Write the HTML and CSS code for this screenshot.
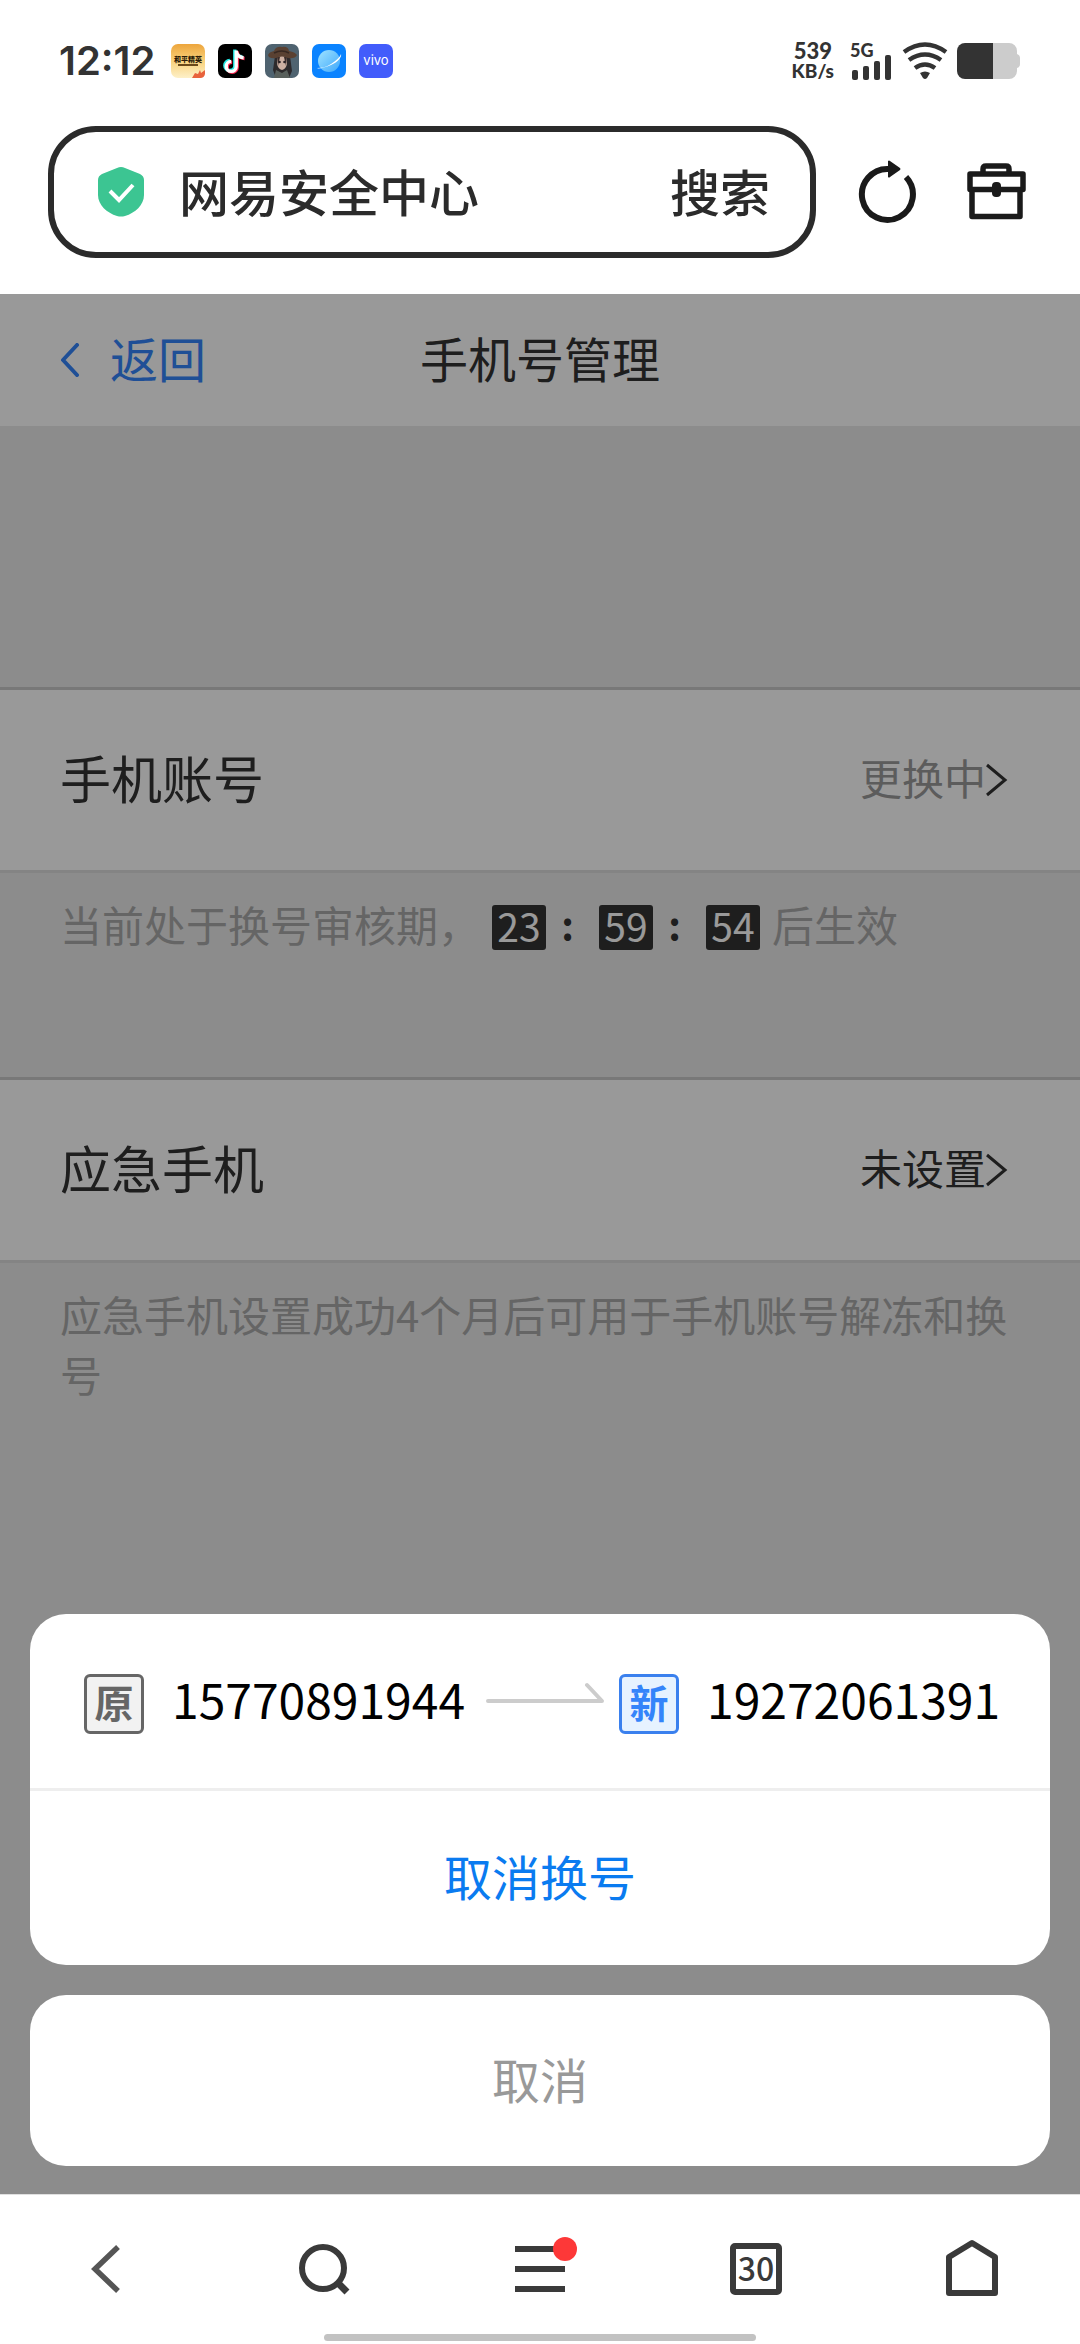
FILE: index.html
```html
<!DOCTYPE html>
<html lang="zh-CN">
<head>
<meta charset="utf-8">
<meta name="viewport" content="width=device-width, initial-scale=1">
<title>手机号管理</title>
<link rel="stylesheet" href="styles.css">
</head>
<body>
<div class="screen">
  <header class="status">
    <span class="clock">12:12</span>
    <div class="apps">
      <svg class="app" viewBox="0 0 34 34" aria-hidden="true">
        <defs>
          <linearGradient id="gold" x1="0" y1="0" x2="0" y2="1"><stop offset="0" stop-color="#eda53c"/><stop offset=".5" stop-color="#f9d27c"/><stop offset="1" stop-color="#fdf0c8"/></linearGradient>
        </defs>
        <rect width="34" height="34" rx="7" fill="url(#gold)"/>
        <path d="M21 34l3-5 3 1 2-4 1 3 4-3v4a5 5 0 0 1-5 4z" fill="#e8623c"/>
        <text x="17" y="18" text-anchor="middle" class="game-name">和平精英</text>
        <rect x="7" y="20" width="20" height="2" fill="#6b4a1a"/>
      </svg>
      <svg class="app" viewBox="0 0 34 34" aria-hidden="true">
        <rect width="34" height="34" rx="7" fill="#000"/>
        <g fill="none" stroke-width="3.4">
          <path d="M17.600 6v16a5 5 0 1 1-5-5M17.600 7c.7 4 3.400 6 7.400 6.300" stroke="#25e8e4" transform="translate(-.8 -.5)"/>
          <path d="M18.600 7v16a5 5 0 1 1-5-5M18.600 8c.7 4 3.400 6 7.400 6.300" stroke="#fb2c55" transform="translate(.6 .2)"/>
          <path d="M18.200 6.400v16a5 5 0 1 1-5-5M18.200 7.400c.7 4 3.400 6 7.400 6.300" stroke="#fff"/>
        </g>
      </svg>
      <svg class="app" viewBox="0 0 34 34" aria-hidden="true">
        <rect width="34" height="34" rx="7" fill="#4f6370"/>
        <path d="M10 12h15l2 15-3 7H11l-3-8z" fill="#2d2a2c"/>
        <path d="M12 12h10v8q-1 5-5 6-4-1-5-6z" fill="#cdb0a2"/>
        <path d="M12 13h3l-2 9zM22 13h-3l2 9z" fill="#3a2c2a"/>
        <circle cx="14.500" cy="18" r="1.300" fill="#2b2226"/><circle cx="19.500" cy="18" r="1.300" fill="#2b2226"/>
        <path d="M3 11q1-3 6-4 2-5 8-4 6-1 7 4 6 1 8 4-2 4-9 3-6-3-12 0-7 1-8-3z" fill="#5a4132"/>
        <path d="M9 9q8-4 15 0" stroke="#372821" stroke-width="1.500" fill="none"/>
        <path d="M9 34l2-8 6 3 5-3 3 8z" fill="#59605c"/>
      </svg>
      <svg class="app" viewBox="0 0 34 34" aria-hidden="true">
        <defs><linearGradient id="globe" x1="0" y1="0" x2="1" y2="1"><stop offset="0" stop-color="#9fe3ff"/><stop offset="1" stop-color="#3fa8fb"/></linearGradient></defs>
        <rect width="34" height="34" rx="7" fill="#0a83ff"/>
        <circle cx="17" cy="17" r="11" fill="url(#globe)"/>
        <path d="M29 10c1 3-3 8-10 11S6 25 5 24c5 0 9-1 14-4s9-7 10-10z" fill="#fff"/>
      </svg>
      <svg class="app" viewBox="0 0 34 34" aria-hidden="true">
        <rect width="34" height="34" rx="7" fill="#425cfb"/>
        <text x="17" y="21" text-anchor="middle" class="brand-name">vivo</text>
      </svg>
    </div>
    <div class="signals">
      <span class="rate"><b>539</b><small>KB/s</small></span>
      <svg class="cell" viewBox="0 0 44 38" aria-hidden="true">
        <text x="1" y="15" class="cell-name">5G</text>
        <g fill="#333"><rect x="3" y="28" width="6" height="10" rx="2"/><rect x="14" y="24" width="6" height="14" rx="2"/><rect x="25" y="19" width="6" height="19" rx="2"/><rect x="36" y="13" width="6" height="25" rx="2"/></g>
      </svg>
      <svg class="wifi" viewBox="0 0 46 38" aria-hidden="true">
        <g fill="none" stroke="#333" stroke-width="4.500"><path d="M2 10Q23-5 44 10"/><path d="M7 18Q23 7 39 18"/><path d="M13 26Q23 19 33 26"/></g>
        <path d="M18 31q5-3 10 0l-3 5q-2 2-4 0z" fill="#333"/>
      </svg>
      <svg class="battery" viewBox="0 0 64 36" aria-hidden="true">
        <path d="M36 0h16a8 8 0 0 1 8 8v3q3 1 3 4v6q0 3-3 4v3a8 8 0 0 1-8 8H36z" fill="#ccc"/>
        <path d="M36 0H8a8 8 0 0 0-8 8v20a8 8 0 0 0 8 8h28z" fill="#333"/>
      </svg>
    </div>
  </header>

  <form class="toolbar">
    <div class="searchbox">
      <svg class="shield" viewBox="0 0 46 50" aria-hidden="true">
        <path d="M19 1q4-2 8 0l15 6q4 2 4 6v15c0 10-9 18-19 21q-4 1-8 0C9 46 0 38 0 28V13q0-4 4-6z" fill="#3cc592"/>
        <path d="M12 24l9 9 14-15" fill="none" stroke="#fff" stroke-width="4"/>
      </svg>
      <input class="address" type="text" aria-label="网址" value="网易安全中心">
      <button class="go" type="button">搜索</button>
    </div>
    <div class="tools">
      <button class="tool" type="button" aria-label="刷新">
        <svg viewBox="0 0 60 64" width="60" height="64">
          <path d="M31 9A25.500 25.500 0 1 0 48 17" fill="none" stroke="#1a1a1a" stroke-width="6"/>
          <path d="M30 1q1-1 2 0l10 7q1 1 0 2l-10 7q-1 1-2 0z" fill="#1a1a1a"/>
        </svg>
      </button>
      <button class="tool" type="button" aria-label="工具箱">
        <svg viewBox="0 0 60 64" width="60" height="64">
          <g fill="none" stroke="#1a1a1a" stroke-width="5.500" stroke-linejoin="round"><path d="M17 14V9q0-3 3-3h20q3 0 3 3v5"/><rect x="4" y="14" width="53" height="15.500"/><path d="M6 30v26.500h48V30"/></g>
          <rect x="26" y="22" width="9" height="15" rx="4" fill="#1a1a1a"/>
        </svg>
      </button>
    </div>
  </form>

  <main class="view">
    <div class="page">
      <nav class="titlebar">
        <a class="back" href="#">
          <svg viewBox="0 0 20 34" width="20" height="34" aria-hidden="true"><path d="M17 2L3 17l14 15" fill="none" stroke="#3484fa" stroke-width="4" stroke-linecap="round" stroke-linejoin="round"/></svg>
          <span class="text">返回</span>
        </a>
        <h1 class="title text">手机号管理</h1>
      </nav>
      <section class="group group-first">
        <a class="row" href="#">
          <span class="label text">手机账号</span>
          <span class="value pending text">更换中</span>
          <svg class="more" viewBox="0 0 22 34" aria-hidden="true"><path d="M1 2l18 15L1 32" fill="none" stroke="#333" stroke-width="3"/></svg>
        </a>
        <p class="hint">当前处于换号审核期，<span class="timer"><b>23</b><i>:</i><b>59</b><i>:</i><b>54</b></span>后生效</p>
      </section>
      <section class="group">
        <a class="row" href="#">
          <span class="label text">应急手机</span>
          <span class="value text">未设置</span>
          <svg class="more" viewBox="0 0 22 34" aria-hidden="true"><path d="M1 2l18 15L1 32" fill="none" stroke="#333" stroke-width="3"/></svg>
        </a>
        <p class="hint">应急手机设置成功4个月后可用于手机账号解冻和换号</p>
      </section>
    </div>
    <div class="overlay">
      <div class="sheet" role="dialog" aria-label="换号">
        <div class="change">
          <span class="badge">原</span>
          <span class="number text">15770891944</span>
          <svg class="arrow" viewBox="0 0 118 38" aria-hidden="true"><path d="M2 19h114L101 3" fill="none" stroke="#ccc" stroke-width="4" stroke-linecap="round" stroke-linejoin="round"/></svg>
          <span class="badge badge-new">新</span>
          <span class="number text">19272061391</span>
        </div>
        <button class="action" type="button"><span class="text">取消换号</span></button>
      </div>
      <button class="sheet cancel" type="button"><span class="text">取消</span></button>
    </div>
  </main>

  <nav class="bottom">
    <div class="tabs">
      <button class="tab" type="button" aria-label="后退"><svg viewBox="0 0 60 60" width="60" height="60"><path d="M40 8L17 30l23 22" fill="none" stroke="#555" stroke-width="5.500"/></svg></button>
      <button class="tab" type="button" aria-label="搜索"><svg viewBox="0 0 60 60" width="60" height="60"><circle cx="29" cy="29" r="21" fill="none" stroke="#3a3a3a" stroke-width="6"/><path d="M43 43l10 10" stroke="#3a3a3a" stroke-width="7"/></svg></button>
      <button class="tab" type="button" aria-label="菜单"><svg viewBox="0 0 60 60" width="60" height="60"><path d="M5 10h50M5 30h50M5 50h50" stroke="#3a3a3a" stroke-width="6"/></svg><span class="dot"></span></button>
      <button class="tab" type="button" aria-label="窗口"><span class="windows">30</span></button>
      <button class="tab" type="button" aria-label="主页"><svg viewBox="0 0 60 60" width="60" height="60"><path d="M7 18L30 4l23 14v36H7z" fill="none" stroke="#3a3a3a" stroke-width="6" stroke-linejoin="round"/></svg></button>
    </div>
    <span class="homebar"></span>
  </nav>
</div>
</body>
</html>
```
FILE: styles.css
```css
* { box-sizing: border-box; }

body {
  margin: 0;
  background: #fff;
  color: #333;
  font-family: "Noto Sans CJK SC", "Noto Sans", sans-serif;
}

button, input {
  margin: 0;
  padding: 0;
  border: 0;
  background: none;
  color: inherit;
  font: inherit;
}

a { color: inherit; text-decoration: none; }

svg { display: block; flex: none; }

.text {
  display: block;
  padding-bottom: 6px;
}

.screen {
  display: flex;
  flex-direction: column;
  min-height: 100vh;
}

/* Status bar */
.status {
  display: flex;
  align-items: center;
  height: 122px;
  padding: 0 59px;
}

.clock {
  min-width: 112px;
  font: 600 40px/60px Inter, sans-serif;
}

.apps {
  display: flex;
  gap: 13px;
}

.app { width: 34px; height: 34px; }

.game-name { font: 900 7px "Noto Sans CJK SC", sans-serif; fill: #2b1b08; }
.brand-name { font: 400 13px Inter, sans-serif; fill: #fff; }

.signals {
  display: flex;
  align-items: center;
  gap: 9px;
  margin-left: auto;
}

.rate {
  display: flex;
  flex-direction: column;
  align-items: center;
  margin-right: 6px;
  font-family: Lato, sans-serif;
  font-weight: 900;
}

.rate b { font-size: 22px; font-weight: 900; line-height: 20px; }
.rate small { font-size: 19px; line-height: 20px; }

.cell { width: 44px; height: 38px; overflow: visible; }
.cell-name { font: 900 18px Lato, sans-serif; fill: #333; }
.wifi { width: 46px; height: 38px; }
.battery { width: 64px; height: 36px; }

/* Browser toolbar */
.toolbar {
  display: flex;
  align-items: center;
  gap: 42px;
  height: 172px;
  padding: 4px 54px 36px 48px;
}

.searchbox {
  display: flex;
  flex: 1;
  align-items: center;
  min-width: 0;
  height: 132px;
  padding: 0 40px 0 44px;
  border: 6px solid #2b2b2b;
  border-radius: 48px;
  color: #2b2b2b;
  font-size: 50px;
  font-weight: 500;
}

.shield { width: 46px; height: 50px; }

.address {
  flex: 1;
  min-width: 0;
  height: 76px;
  margin-left: 35px;
  padding-bottom: 4px;
  outline: 0;
}

.go { padding-bottom: 4px; line-height: 72px; }

.tools { display: flex; gap: 48px; }

/* Page under the dialog */
.view {
  position: relative;
  display: flex;
  flex: 1;
  flex-direction: column;
}

.page {
  flex: 1;
  padding-bottom: 60px;
  background: #eaeaea;
}

.titlebar {
  display: grid;
  grid-template-columns: 1fr auto 1fr;
  align-items: center;
  height: 132px;
  padding: 0 60px;
  background: #fff;
  font-size: 48px;
  line-height: 72px;
}

.back {
  display: flex;
  align-items: center;
  gap: 30px;
  color: #3484fa;
}

.title { margin: 0; font-size: 48px; font-weight: 400; }

.group { margin-top: 120px; }
.group-first { margin-top: 261px; }

.row {
  display: flex;
  align-items: center;
  height: 186px;
  padding: 0 72px 0 60px;
  border-top: 3px solid #c8c8c8;
  border-bottom: 3px solid #dcdcdc;
  background: #fff;
}

.label { flex: 1; font-size: 51px; line-height: 72px; }
.value { font-size: 42px; line-height: 60px; }
.pending { color: #999; }
.more { width: 22px; height: 34px; }

.hint {
  margin: 0;
  padding: 21px 60px 3px;
  color: #a8a8a8;
  font-size: 42px;
  line-height: 60px;
}

.timer {
  display: inline-flex;
  align-items: flex-start;
  height: 60px;
  margin: 0 12px;
  color: #333;
  font-size: 39px;
  vertical-align: top;
}

.timer b {
  width: 54px;
  height: 45px;
  margin-top: 11px;
  border-radius: 3px;
  background: #333;
  color: #fff;
  font-weight: 400;
  line-height: 41px;
  text-align: center;
}

.timer i {
  width: 53px;
  padding-right: 10px;
  font-style: normal;
  font-weight: 700;
  line-height: 60px;
  text-align: center;
}

/* Action sheet */
.overlay {
  position: absolute;
  inset: 0;
  display: flex;
  flex-direction: column;
  justify-content: flex-end;
  gap: 30px;
  padding: 0 30px 28px;
  background: rgba(0, 0, 0, .4);
}

.sheet {
  overflow: hidden;
  border-radius: 36px;
  background: #fff;
}

.change {
  display: flex;
  align-items: center;
  height: 177px;
  padding: 0 48px 0 54px;
  border-bottom: 3px solid #eee;
}

.badge {
  width: 60px;
  height: 60px;
  margin: 6px 28px 0 0;
  border: 3px solid #666;
  border-radius: 6px;
  background: #f2f2f2;
  color: #666;
  font-size: 39px;
  font-weight: 700;
  line-height: 48px;
  text-align: center;
}

.badge-new { border-color: #3a80ee; background: #e6f2ff; color: #3484fa; }

.number { color: #000; font-size: 48px; line-height: 72px; }
.arrow { width: 118px; height: 38px; margin: 0 15px 0 21px; }

.action {
  display: block;
  width: 100%;
  height: 174px;
  color: #0a7bf0;
  font-size: 48px;
}

.cancel { height: 171px; color: #999; font-size: 48px; }

/* Bottom navigation */
.bottom {
  display: flex;
  flex-direction: column;
  align-items: center;
  height: 150px;
  border-top: 1px solid #e0e0e0;
}

.tabs {
  display: grid;
  grid-template-columns: repeat(5, 1fr);
  width: 100%;
  height: 139px;
  padding-top: 9px;
}

.tab {
  position: relative;
  display: flex;
  align-items: center;
  justify-content: center;
}

.dot {
  position: absolute;
  top: 33px;
  left: calc(50% + 13px);
  width: 24px;
  height: 24px;
  border-radius: 50%;
  background: #fd3838;
}

.windows {
  width: 52px;
  height: 52px;
  border: 6px solid #3a3a3a;
  border-radius: 5px;
  color: #3a3a3a;
  font-size: 32px;
  font-weight: 500;
  line-height: 37px;
}

.homebar {
  width: 40%;
  height: 7px;
  border-radius: 4px;
  background: #c2c2c2;
}
```
